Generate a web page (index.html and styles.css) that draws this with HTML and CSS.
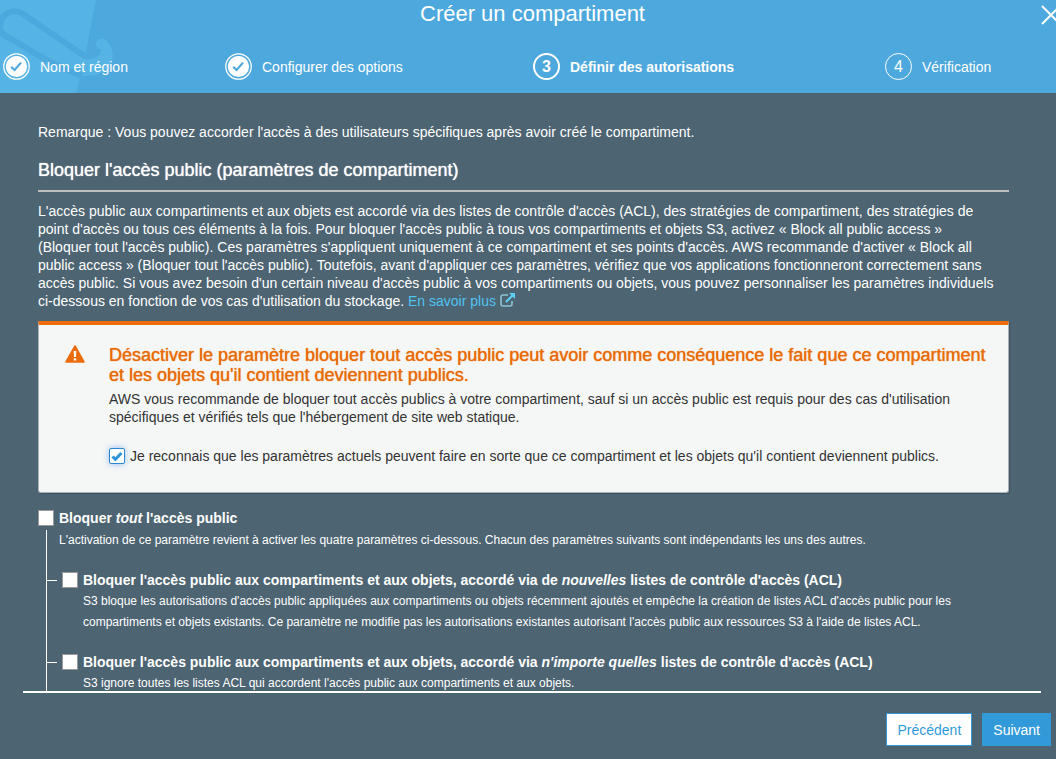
FILE: index.html
```html
<!DOCTYPE html>
<html lang="fr">
<head>
<meta charset="utf-8">
<meta name="viewport" content="width=device-width, initial-scale=1">
<title>Créer un compartiment</title>
<link rel="stylesheet" href="styles.css">
</head>
<body>
<div class="dialog">
  <header class="header">
    <svg class="bucket" width="120" height="93" viewBox="0 0 120 93" aria-hidden="true">
      <path fill="#56b4e4" d="M0 0H96L86 52L96 54C100 50 95 46 96 43C98 38 103 37 107 41C114 49 115 61 108 68C102 75 91 76 80 76L79 83Q78 89 76 93H0Z"/>
      <path fill="none" stroke="#4da8dd" stroke-width="6" stroke-linejoin="round" d="M0 28C-1 15 12 7 23 14L80 53C88 59 98 56 98 49M0 28C1 34 6 37 11 39C32 51 50 64 82 76"/>
    </svg>
    <h1 class="title">Créer un compartiment</h1>
    <button class="close" type="button" aria-label="Fermer">
      <svg width="20" height="20" viewBox="0 0 20 20"><path d="M1 1L19 19M19 1L1 19" stroke="#fff" stroke-width="2"/></svg>
    </button>
    <ol class="steps">
      <li class="step"><svg class="step-icon" viewBox="0 0 28 28"><circle cx="14" cy="14" r="13.2" fill="none" stroke="#fff" stroke-width="1.3"/><circle cx="14" cy="14" r="11" fill="#fff"/><path d="M8.5 14.4L12 17.6L18.7 10" fill="none" stroke="#4da8dd" stroke-width="2.2"/></svg><span>Nom et région</span></li>
      <li class="step"><svg class="step-icon" viewBox="0 0 28 28"><circle cx="14" cy="14" r="13.2" fill="none" stroke="#fff" stroke-width="1.3"/><circle cx="14" cy="14" r="11" fill="#fff"/><path d="M8.5 14.4L12 17.6L18.7 10" fill="none" stroke="#4da8dd" stroke-width="2.2"/></svg><span>Configurer des options</span></li>
      <li class="step current" aria-current="step"><span class="number">3</span><span>Définir des autorisations</span></li>
      <li class="step"><span class="number">4</span><span>Vérification</span></li>
    </ol>
  </header>

  <main class="content">
    <p class="note">Remarque : Vous pouvez accorder l'accès à des utilisateurs spécifiques après avoir créé le compartiment.</p>
    <h2 class="section-title">Bloquer l'accès public (paramètres de compartiment)</h2>
    <p class="intro">L'accès public aux compartiments et aux objets est accordé via des listes de contrôle d'accès (ACL), des stratégies de compartiment, des stratégies de<br>
      point d'accès ou tous ces éléments à la fois. Pour bloquer l'accès public à tous vos compartiments et objets S3, activez « Block all public access »<br>
      (Bloquer tout l'accès public). Ces paramètres s'appliquent uniquement à ce compartiment et ses points d'accès. AWS recommande d'activer « Block all<br>
      public access » (Bloquer tout l'accès public). Toutefois, avant d'appliquer ces paramètres, vérifiez que vos applications fonctionneront correctement sans<br>
      accès public. Si vous avez besoin d'un certain niveau d'accès public à vos compartiments ou objets, vous pouvez personnaliser les paramètres individuels<br>
      ci-dessous en fonction de vos cas d'utilisation du stockage. <a class="more" href="#">En savoir plus <svg class="external" viewBox="0 0 16 14"><path d="M8 2H3Q1 2 1 4V11Q1 13 3 13H10Q12 13 12 11V8" fill="none" stroke="#8cc3d4" stroke-width="1.6"/><path d="M6 9L13 2" stroke="#5fd0f5" stroke-width="2.2"/><path d="M9 0H15V6Z" fill="#5fd0f5"/></svg></a></p>

    <section class="alert">
      <svg class="warning" viewBox="0 0 20 18" aria-hidden="true"><path d="M10 1L19 17H1Z" fill="#eb6c0a" stroke="#eb6c0a" stroke-width="1.6" stroke-linejoin="round"/><path d="M8.7 6H11.3L11 12H9ZM8.8 13.3H11.2V15.6H8.8Z" fill="#fff"/></svg>
      <div class="alert-body">
        <h3 class="alert-title">Désactiver le paramètre bloquer tout accès public peut avoir comme conséquence le fait que ce compartiment<br>et les objets qu'il contient deviennent publics.</h3>
        <p class="alert-text">AWS vous recommande de bloquer tout accès publics à votre compartiment, sauf si un accès public est requis pour des cas d'utilisation<br>spécifiques et vérifiés tels que l'hébergement de site web statique.</p>
        <label class="ack"><input class="check focused" type="checkbox" checked><span>Je reconnais que les paramètres actuels peuvent faire en sorte que ce compartiment et les objets qu'il contient deviennent publics.</span></label>
      </div>
    </section>

    <div class="option">
      <label class="option-label"><input class="check" type="checkbox"><span>Bloquer <em>tout</em> l'accès public</span></label>
    </div>
    <div class="tree">
      <p class="hint root-hint">L'activation de ce paramètre revient à activer les quatre paramètres ci-dessous. Chacun des paramètres suivants sont indépendants les uns des autres.</p>
      <div class="child">
        <label class="option-label"><input class="check" type="checkbox"><span>Bloquer l'accès public aux compartiments et aux objets, accordé via de <em>nouvelles</em> listes de contrôle d'accès (ACL)</span></label>
        <p class="hint">S3 bloque les autorisations d'accès public appliquées aux compartiments ou objets récemment ajoutés et empêche la création de listes ACL d'accès public pour les<br>compartiments et objets existants. Ce paramètre ne modifie pas les autorisations existantes autorisant l'accès public aux ressources S3 à l'aide de listes ACL.</p>
      </div>
      <div class="child">
        <label class="option-label"><input class="check" type="checkbox"><span>Bloquer l'accès public aux compartiments et aux objets, accordé via <em>n'importe quelles</em> listes de contrôle d'accès (ACL)</span></label>
        <p class="hint">S3 ignore toutes les listes ACL qui accordent l'accès public aux compartiments et aux objets.</p>
      </div>
    </div>
  </main>

  <footer class="footer">
    <button class="button secondary" type="button">Précédent</button>
    <button class="button primary" type="button">Suivant</button>
  </footer>
</div>
</body>
</html>
```
FILE: styles.css
```css
* { box-sizing: border-box; }
body, h1, h2, h3, p, ol { margin: 0; padding: 0; }
body {
  background: #4d6472;
  color: #fff;
  font: 14px/18px "Liberation Sans", Arial, sans-serif;
}
.dialog { display: flex; flex-direction: column; height: 100vh; overflow: hidden; }
.header {
  position: relative;
  flex: none;
  display: flex;
  flex-direction: column;
  gap: 25px;
  padding-bottom: 13px;
  background: #4da8dd;
  overflow: hidden;
}
.bucket { position: absolute; top: 0; left: 0; }
.title { position: relative; padding-left: 9px; font-size: 22px; line-height: 28px; font-weight: 400; text-align: center; }
.close { position: absolute; top: 5px; right: -5px; padding: 0; border: 0; background: none; }
.close svg { display: block; }
.steps {
  position: relative;
  display: grid;
  grid-template-columns: 222fr 308fr 352fr 171fr;
  padding-left: 3px;
  list-style: none;
}
.step { display: flex; align-items: center; gap: 10px; white-space: nowrap; }
.step-icon { width: 27px; height: 27px; flex: none; }
.number {
  display: grid;
  place-items: center;
  width: 27px;
  height: 27px;
  border: 1px solid #fff;
  border-radius: 50%;
  font-size: 16px;
}
.current { font-weight: 700; }
.current .number { border-width: 2px; }

.content {
  flex: 1;
  min-height: 0;
  margin: 0 15px 0 23px;
  padding: 30px 32px 0 15px;
  border-bottom: 2px solid #fff;
  overflow: hidden;
}
.section-title, .alert-title { font-size: 18px; line-height: 20px; font-weight: 400; text-shadow: 0 0 1px currentColor; }
.section-title { margin-top: 19px; padding-bottom: 10px; border-bottom: 2px solid #bfbfbf; }
.intro { margin-top: 10px; }
.note, .intro, .alert-text, .alert-title, .hint, .ack { white-space: nowrap; }
.more { color: #4fc3f0; text-decoration: none; }
.external { width: 16px; height: 14px; vertical-align: -1px; }

.alert {
  display: flex;
  gap: 24px;
  margin-top: 11px;
  padding: 20px 26px 27px;
  border: 1px solid #aab3b8;
  border-top: 4px solid #ec6b0a;
  border-radius: 0 0 3px 3px;
  background: #f5f7f7;
  box-shadow: 1px 1px 1px #3f525e;
  color: #333;
}
.warning { width: 20px; height: 18px; flex: none; }
.alert-body { min-width: 0; }
.alert-title { color: #e96a08; }
.alert-text { margin-top: 5px; }
.ack { display: flex; align-items: center; gap: 5px; margin-top: 21px; }

.check {
  appearance: none;
  flex: none;
  width: 16px;
  height: 16px;
  margin: 0;
  border: 1px solid #999;
  background: #fff;
}
.check:checked {
  background: #fff url("data:image/svg+xml,%3Csvg xmlns='http://www.w3.org/2000/svg' viewBox='0 0 14 14'%3E%3Cpath d='M2.5 7.5L5.3 10.3L11.5 4' fill='none' stroke='%232e96d8' stroke-width='3'/%3E%3C/svg%3E");
}
.focused { border-color: #2e87d2; border-radius: 2px; box-shadow: 0 0 6px #8fbcec; }

.option { padding-top: 16px; }
.option-label { display: flex; align-items: center; gap: 5px; font-weight: 700; white-space: nowrap; }
.hint { font-size: 12px; line-height: 21px; }
.tree { margin: 5px 0 0 8px; border-left: 1px solid #fff; }
.root-hint { margin-top: -2px; padding-left: 12px; }
.child { padding-top: 20px; }
.child .option-label::before { content: ""; width: 10px; height: 1px; background: #fff; }
.child .hint { margin-top: 2px; padding-left: 36px; }

.footer { flex: none; display: flex; justify-content: flex-end; gap: 10px; padding: 20px 5px 13px; }
.button { height: 33px; padding: 0 10px; border: 1px solid #339ada; font: inherit; }
.secondary { background: #fff; color: #339ada; }
.primary { background: #339ada; color: #fff; }
```
